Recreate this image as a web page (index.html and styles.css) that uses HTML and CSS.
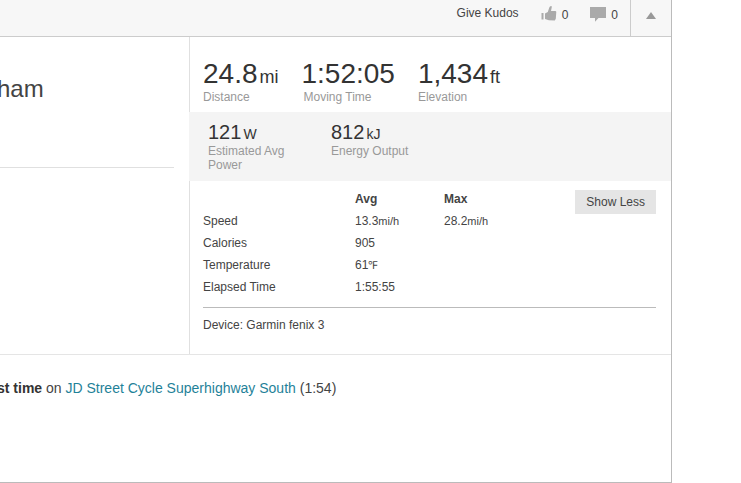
FILE: index.html
```
<!DOCTYPE html>
<html lang="en">
<head>
<meta charset="utf-8">
<title>Activity</title>
<link rel="stylesheet" href="styles.css">
</head>
<body>
<main class="card">
  <header class="toolbar">
    <button class="give" type="button">Give Kudos</button>
    <button class="counter" type="button" aria-label="Kudos">
      <svg class="icon" width="16" height="16" viewBox="0 0 16 16" aria-hidden="true"><path d="M.5 7h2v6.500h-2zM4 7.500 6.800 6 8.300 1.500C9.300 0 10.800-.5 10.800 1L10 5h4.500l.8.8-.5 7-1 1.600-6-.2L4 13z"/></svg>
      <span>0</span>
    </button>
    <button class="counter" type="button" aria-label="Comments">
      <svg class="icon" width="16" height="16" viewBox="0 0 16 16" aria-hidden="true"><path d="M0 1h16v11h-7.500L5 15.800V12H0z"/></svg>
      <span>0</span>
    </button>
    <button class="toggle" type="button" aria-label="Collapse"><svg width="10" height="7" viewBox="0 0 10 7" aria-hidden="true"><path d="M5 0l5 7H0z"/></svg></button>
  </header>
  <div class="columns">
    <section class="summary"><h1>ham</h1></section>
    <section class="stats">
      <ul class="primary">
        <li><strong>24.8<abbr>mi</abbr></strong><span>Distance</span></li>
        <li><strong>1:52:05</strong><span class="inset">Moving Time</span></li>
        <li><strong>1,434<abbr>ft</abbr></strong><span>Elevation</span></li>
      </ul>
      <ul class="secondary">
        <li><strong>121<abbr>W</abbr></strong><span>Estimated Avg Power</span></li>
        <li><strong>812<abbr>kJ</abbr></strong><span>Energy Output</span></li>
      </ul>
      <div class="more">
        <div class="details">
          <table>
            <thead><tr><td></td><th scope="col">Avg</th><th scope="col">Max</th></tr></thead>
            <tbody>
              <tr><th scope="row">Speed</th><td>13.3<abbr>mi/h</abbr></td><td>28.2<abbr>mi/h</abbr></td></tr>
              <tr><th scope="row">Calories</th><td>905</td><td></td></tr>
              <tr><th scope="row">Temperature</th><td>61<abbr class="degree">℉</abbr></td><td></td></tr>
              <tr><th scope="row">Elapsed Time</th><td>1:55:55</td><td></td></tr>
            </tbody>
          </table>
          <button class="less" type="button">Show Less</button>
        </div>
        <p class="device">Device: Garmin fenix 3</p>
      </div>
    </section>
  </div>
  <p class="achievement"><strong>st time</strong> on <a href="#segment">JD Street Cycle Superhighway South</a> (1:54)</p>
</main>
</body>
</html>
```
FILE: styles.css
```
* { box-sizing: border-box; }

body {
  margin: 0;
  background: #fff;
  color: #444;
  font: 12px/14px "Liberation Sans", Arial, sans-serif;
}

h1, p, ul { margin: 0; padding: 0; }
ul { list-style: none; }
abbr { line-height: 1; text-decoration: none; }

button {
  border: 0;
  padding: 0;
  background: none;
  color: inherit;
  font: inherit;
}

.card {
  margin: 0 69px 0 -3px;
  border: solid #bbb;
  border-width: 0 1px 1px 0;
}

.toolbar {
  display: flex;
  justify-content: flex-end;
  height: 37px;
  border-bottom: 1px solid #ccc;
  background: #f7f7f7;
}

.give { align-self: flex-start; margin: 6px 22px 0 0; }

.counter {
  display: flex;
  align-self: flex-start;
  gap: 5px;
  margin-top: 6px;
}
.counter span { margin-top: 2px; }
.counter + .counter { margin: 6px 12px 0 22px; }
.icon { fill: #aaa; }

.toggle {
  width: 41px;
  border-left: 1px solid #ccc;
  padding-bottom: 7px;
}
.toggle svg { fill: #999; }

.columns {
  display: flex;
  border-bottom: 1px solid #e5e5e5;
}

.summary {
  flex: 1;
  padding-right: 15px;
}

h1 {
  height: 131px;
  padding-top: 38px;
  border-bottom: 1px solid #e0e0e0;
  font-size: 24px;
  font-weight: 400;
  line-height: 28px;
}

.stats {
  width: 482px;
  border-left: 1px solid #e0e0e0;
}

.stats li { display: flex; flex-direction: column; }
.stats li strong { color: #333; font-weight: 400; }
.stats li span { color: #999; }

.primary {
  display: flex;
  gap: 23px;
  padding: 20px 13px 8px;
}
.primary strong { font-size: 28px; line-height: 33px; }
.primary abbr { margin-left: 2px; font-size: 18px; }
.primary .inset { padding-left: 2px; }

.secondary {
  display: flex;
  gap: 33px;
  margin-left: -1px;
  padding: 8px 19px 9px;
  background: #f4f4f4;
}
.secondary li { width: 90px; }
.secondary strong { font-size: 20px; line-height: 24px; }
.secondary abbr { margin-left: 2px; font-size: 14px; }

.more { padding: 7px 15px 22px 13px; }

.details {
  display: flex;
  align-items: flex-start;
  justify-content: space-between;
  padding-bottom: 9px;
  border-bottom: 1px solid #bbb;
}

table { border-collapse: collapse; }
th, td { height: 22px; padding: 0; text-align: left; }
tbody th { width: 152px; font-weight: 400; }
tbody td { width: 89px; }
td abbr { font-size: 11px; }
.degree { font-family: "Liberation Serif", serif; }

.less {
  height: 24px;
  margin-top: 2px;
  padding: 0 11px;
  background: #e5e5e5;
}

.device { padding-top: 10px; }

.achievement {
  padding: 25px 0 86px;
  font-size: 14px;
  line-height: 16px;
}
.achievement strong { color: #333; }
.achievement a { color: #1f8299; text-decoration: none; }
```
